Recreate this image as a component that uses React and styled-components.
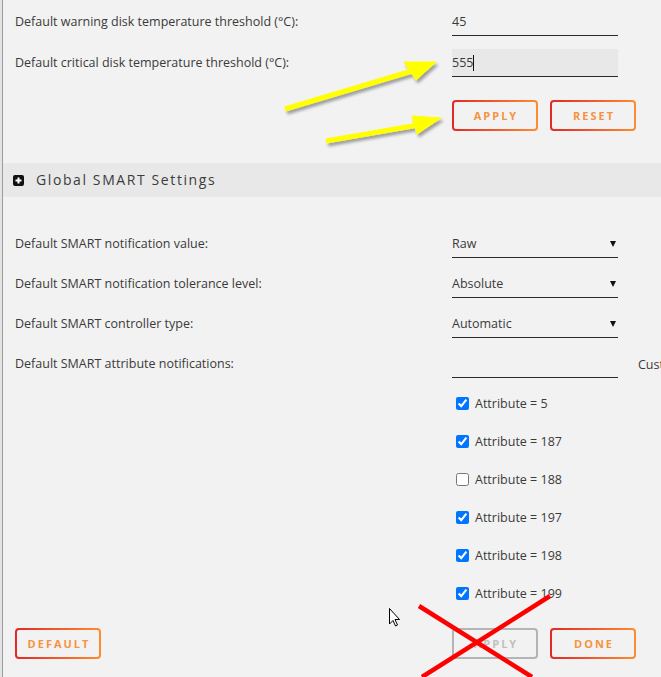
import React from "react";
import styled, { createGlobalStyle } from "styled-components";

const Global = createGlobalStyle`
  html, body { margin: 0; padding: 0; background: #f2f2f2; }
  body { font-family: "Open Sans", "Noto Sans", sans-serif; overflow: hidden; }
`;

const Page = styled.div`
  position: relative;
  width: 661px;
  height: 677px;
  display: flex;
  background: #f2f2f2;
  overflow: hidden;
  color: #3a3a3a;
  font-size: 12.5px;
`;

const Gutter = styled.div`
  width: 2px;
  flex: none;
  background: #e4e4e4;
  border-right: 1px solid #9c9c9c;
`;

const Panel = styled.div`
  flex: 1;
  display: flex;
  flex-direction: column;
  min-width: 0;
`;

const Section = styled.div`
  padding: ${(p) => p.$top || 0}px 0 0 12px;
  display: flex;
  flex-direction: column;
`;

const Row = styled.div`
  display: grid;
  grid-template-columns: 437px 166px max-content;
  align-items: center;
  margin-bottom: ${(p) => p.$gap ?? 13}px;
  white-space: nowrap;
`;

const Label = styled.div`
  line-height: 16px;
`;

const Field = styled.div`
  height: 28px;
  box-sizing: border-box;
  border-bottom: 1px solid #2a2a2a;
  background: ${(p) => (p.$focused ? "#e8e8e8" : "transparent")};
  display: flex;
  align-items: center;
  justify-content: space-between;
  padding-right: 1px;
  color: #3a3a3a;
`;

const Caret = styled.span`
  display: inline-block;
  width: 1px;
  height: 16px;
  background: #111;
  vertical-align: middle;
`;

const Arrow = styled.span`
  width: 0;
  height: 0;
  border-left: 3px solid transparent;
  border-right: 3px solid transparent;
  border-top: 6px solid #111;
  margin-right: 1px;
`;

const Extra = styled.div`
  margin-left: 20px;
`;

const ButtonRow = styled.div`
  display: grid;
  grid-template-columns: 437px auto;
  margin-top: ${(p) => p.$top || 0}px;
`;

const ButtonGroup = styled.div`
  display: flex;
  gap: 12px;
`;

const Button = styled.button`
  width: 86px;
  height: 31px;
  box-sizing: border-box;
  border-radius: 4px;
  border: 2px solid transparent;
  background: ${(p) =>
    p.$disabled
      ? "#f2f2f2"
      : "linear-gradient(#f2f2f2, #f2f2f2) padding-box, linear-gradient(90deg, #e22828, #ff8c2f) border-box"};
  border-color: ${(p) => (p.$disabled ? "#b4b4b4" : "transparent")};
  color: ${(p) => (p.$disabled ? "#c0c0c0" : "#f7923f")};
  font-family: "Open Sans", sans-serif;
  font-weight: 700;
  font-size: 11px;
  letter-spacing: 2px;
  text-transform: uppercase;
  padding: 0 0 0 2px;
  cursor: pointer;
`;

const Header = styled.div`
  margin-top: 32px;
  height: 34px;
  background: #e8e8e8;
  display: flex;
  align-items: center;
  padding-left: 10px;
  gap: 12px;
`;

const HeaderTitle = styled.span`
  font-size: 14px;
  letter-spacing: 1.6px;
  color: #3c3c3c;
  margin-top: -2px;
`;

const PlusIcon = () => (
  <svg width="11" height="11" viewBox="0 0 11 11">
    <rect x="0" y="0" width="11" height="11" rx="2" fill="#111" />
    <path d="M5.5 2.5v6M2.5 5.5h6" stroke="#fff" strokeWidth="2" />
  </svg>
);

const CheckList = styled.div`
  display: flex;
  flex-direction: column;
  padding-left: 437px;
  margin-top: 6px;
`;

const CheckRow = styled.label`
  height: 38px;
  display: flex;
  align-items: center;
  white-space: nowrap;
  input {
    width: 13px;
    height: 13px;
    margin: 0 6px 0 4px;
    accent-color: #0075ff;
  }
`;

const Overlay = styled.svg`
  position: absolute;
  left: 0;
  top: 0;
  pointer-events: none;
`;

const attrs = [
  [5, true],
  [187, true],
  [188, false],
  [197, true],
  [198, true],
  [199, true],
];

const selects = [
  ["Default SMART notification value:", "Raw"],
  ["Default SMART notification tolerance level:", "Absolute"],
  ["Default SMART controller type:", "Automatic"],
];

export default function App() {
  return (
    <>
      <Global />
      <Page>
        <Gutter />
        <Panel>
          <Section $top={8}>
            <Row>
              <Label>Default warning disk temperature threshold (°C):</Label>
              <Field>45</Field>
            </Row>
            <Row>
              <Label>Default critical disk temperature threshold (°C):</Label>
              <Field $focused>
                <span>
                  555
                  <Caret />
                </span>
              </Field>
            </Row>
            <ButtonRow $top={10}>
              <span />
              <ButtonGroup>
                <Button>Apply</Button>
                <Button>Reset</Button>
              </ButtonGroup>
            </ButtonRow>
          </Section>
          <Header>
            <PlusIcon />
            <HeaderTitle>Global SMART Settings</HeaderTitle>
          </Header>
          <Section $top={33}>
            {selects.map(([l, v]) => (
              <Row key={l} $gap={12}>
                <Label>{l}</Label>
                <Field>
                  <span>{v}</span>
                  <Arrow />
                </Field>
              </Row>
            ))}
            <Row $gap={0}>
              <Label>Default SMART attribute notifications:</Label>
              <Field />
              <Extra>Custom attributes:</Extra>
            </Row>
            <CheckList>
              {attrs.map(([n, c]) => (
                <CheckRow key={n}>
                  <input type="checkbox" defaultChecked={c} />
                  Attribute = {n}
                </CheckRow>
              ))}
            </CheckList>
            <ButtonRow $top={16}>
              <div>
                <Button>Default</Button>
              </div>
              <ButtonGroup>
                <Button $disabled>Apply</Button>
                <Button>Done</Button>
              </ButtonGroup>
            </ButtonRow>
          </Section>
        </Panel>
        <Overlay width="661" height="677" viewBox="0 0 661 677">
          <defs>
            <filter id="sh" x="-20%" y="-50%" width="140%" height="200%">
              <feDropShadow dx="2" dy="3" stdDeviation="1.5" floodColor="#000" floodOpacity="0.35" />
            </filter>
          </defs>
          <g fill="#ffff00" stroke="#ffff00" filter="url(#sh)">
            <line x1="285" y1="109" x2="412" y2="71" strokeWidth="5" />
            <polygon points="436,62 404,62 416,80" strokeWidth="1" />
            <line x1="326" y1="141" x2="418" y2="125" strokeWidth="5" />
            <polygon points="441,118 412,116 417,134" strokeWidth="1" />
          </g>
          <g stroke="#ff0000" strokeWidth="4.5" strokeLinecap="butt">
            <line x1="419" y1="606" x2="532" y2="677" />
            <line x1="550" y1="596" x2="422" y2="677" />
          </g>
          <path
            d="M389.5 608.5 L389.5 624 L393 620.5 L395.5 626 L397.5 625 L395 619.5 L399.5 619.5 Z"
            fill="#fff"
            stroke="#000"
            strokeWidth="1"
            strokeLinejoin="round"
          />
        </Overlay>
      </Page>
    </>
  );
}
